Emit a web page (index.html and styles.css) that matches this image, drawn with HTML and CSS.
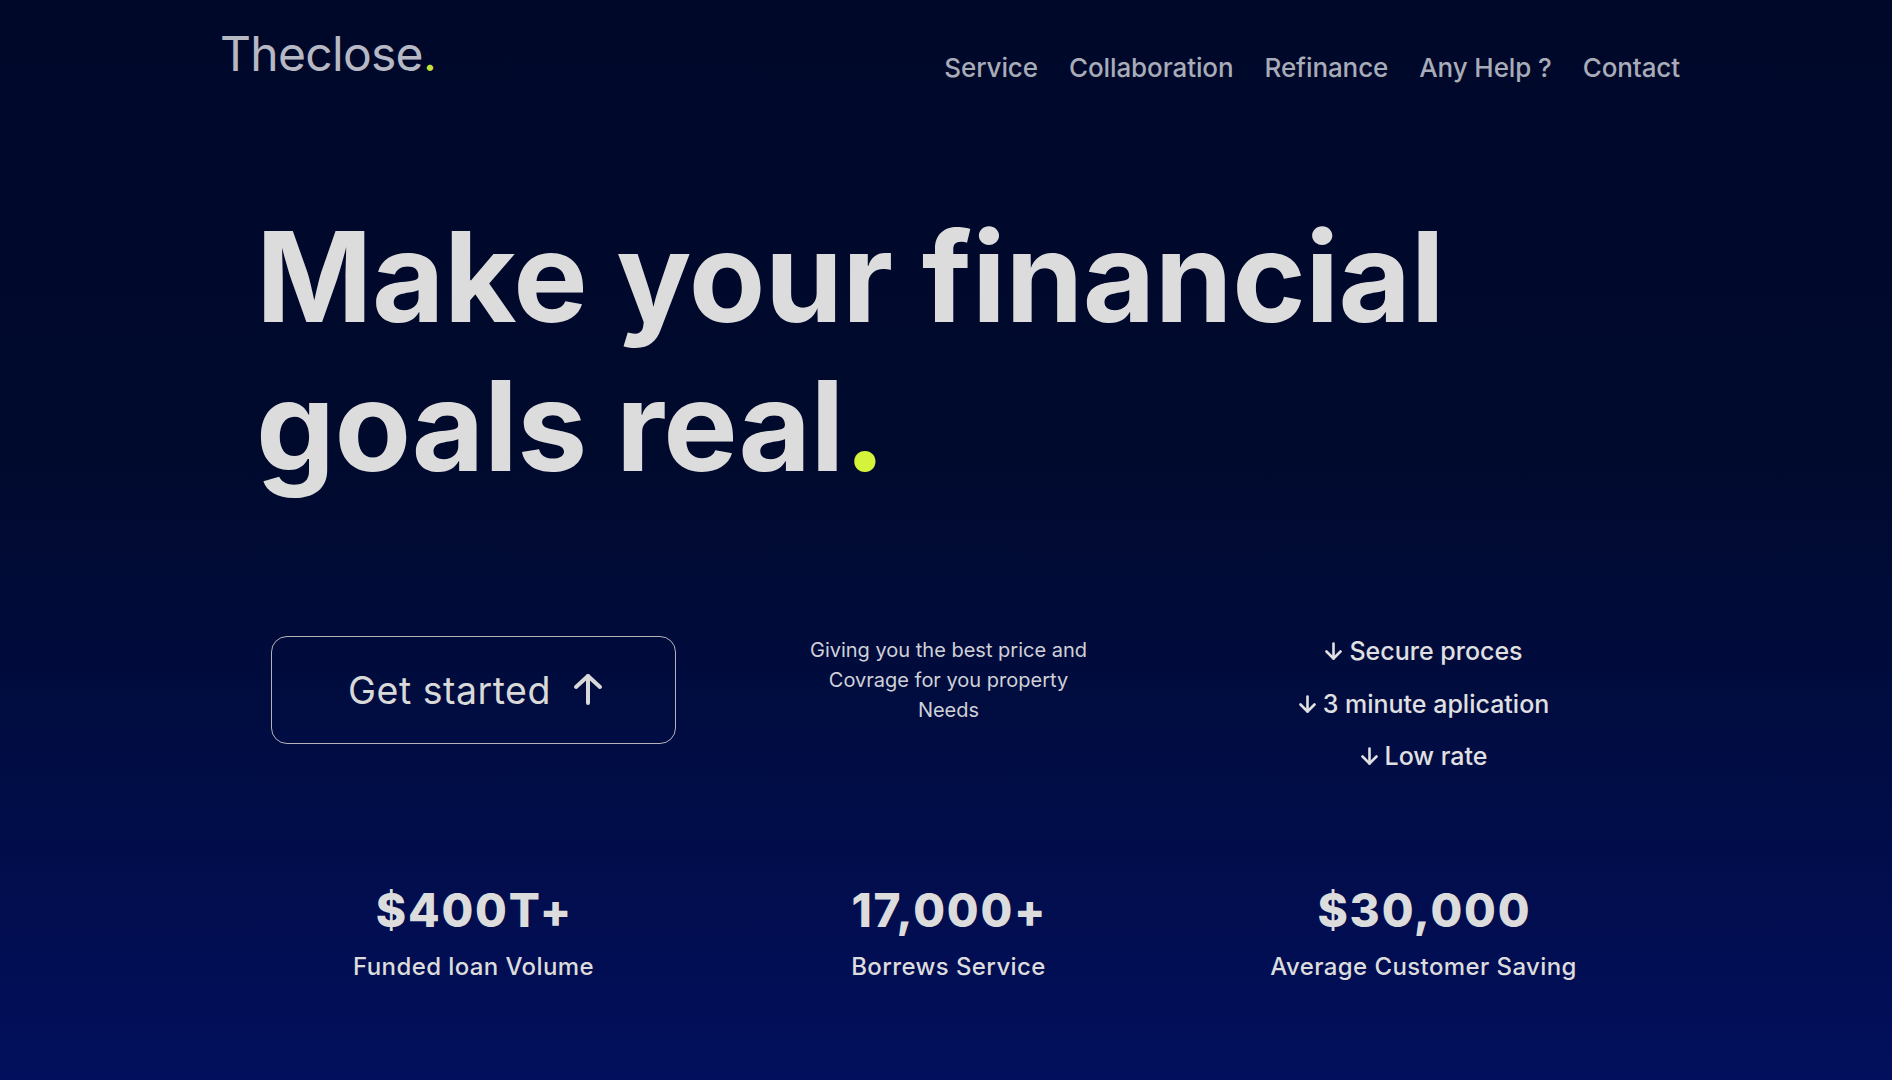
FILE: index.html
```html
<!DOCTYPE html>
<html lang="en">
<head>
<meta charset="utf-8">
<title>Theclose.</title>
<link rel="stylesheet" href="styles.css">
</head>
<body>
<div class="page">
  <header class="header">
    <div class="logo">Theclose<span class="dot">.</span></div>
    <nav class="nav">
      <a href="#">Service</a>
      <a href="#">Collaboration</a>
      <a href="#">Refinance</a>
      <a href="#">Any Help ?</a>
      <a href="#">Contact</a>
    </nav>
  </header>

  <h1 class="title">Make your financial<br>goals real<span class="dot">.</span></h1>

  <section class="row">
    <div class="cell">
      <a class="cta" href="#">
        <span>Get started</span>
        <svg class="cta-arrow" width="30" height="32" viewBox="0 0 30 32" fill="none" stroke="currentColor" stroke-width="4" stroke-linecap="round" stroke-linejoin="round"><path d="M15 30V3"/><path d="M3 14L15 3l12 11"/></svg>
      </a>
    </div>
    <div class="cell">
      <p class="blurb">Giving you the best price and<br>Covrage for you property<br>Needs</p>
    </div>
    <div class="cell">
      <ul class="features">
        <li><svg class="down" width="19" height="18" viewBox="0 0 19 18" fill="none" stroke="currentColor" stroke-width="2.6" stroke-linecap="round" stroke-linejoin="round"><path d="M9.5 1.5v15"/><path d="M2.5 9.5l7 7 7-7"/></svg>Secure proces</li>
        <li><svg class="down" width="19" height="18" viewBox="0 0 19 18" fill="none" stroke="currentColor" stroke-width="2.6" stroke-linecap="round" stroke-linejoin="round"><path d="M9.5 1.5v15"/><path d="M2.5 9.5l7 7 7-7"/></svg>3 minute aplication</li>
        <li><svg class="down" width="19" height="18" viewBox="0 0 19 18" fill="none" stroke="currentColor" stroke-width="2.6" stroke-linecap="round" stroke-linejoin="round"><path d="M9.5 1.5v15"/><path d="M2.5 9.5l7 7 7-7"/></svg>Low rate</li>
      </ul>
    </div>
  </section>

  <section class="row stats">
    <div class="stat">
      <div class="stat-num">$400T+</div>
      <div class="stat-label">Funded loan Volume</div>
    </div>
    <div class="stat">
      <div class="stat-num">17,000+</div>
      <div class="stat-label">Borrews Service</div>
    </div>
    <div class="stat">
      <div class="stat-num">$30,000</div>
      <div class="stat-label">Average Customer Saving</div>
    </div>
  </section>
</div>
</body>
</html>
```

FILE: styles.css
```css
* { box-sizing: border-box; }

html, body {
  margin: 0;
  padding: 0;
}

body {
  font-family: Inter, "Noto Sans", "Liberation Sans", sans-serif;
  background: linear-gradient(180deg, #00082a 0%, #000a2d 42%, #020f5c 100%);
  color: #dcdcdc;
  height: 1080px;
  overflow: hidden;
}

.page {
  height: 1080px;
}

.header {
  display: flex;
  justify-content: space-between;
  align-items: flex-start;
  padding: 30px 0 0 220px;
  width: 1680px;
}

.logo {
  font-size: 48px;
  line-height: 1;
  font-weight: 400;
  color: #b6b8c3;
  letter-spacing: -0.7px;
}

.dot {
  color: #d5f33b;
}

.logo .dot { color: #c6e03c; }

.nav {
  display: flex;
  gap: 31px;
  margin-top: 25px;
}

.nav a {
  font-size: 26px;
  line-height: 1;
  font-weight: 500;
  color: #a8acb8;
  text-decoration: none;
  letter-spacing: -0.1px;
}

.title {
  margin: 121px 0 0 256px;
  font-size: 125px;
  line-height: 149px;
  font-weight: 700;
  letter-spacing: -0.5px;
  color: #dcdcdc;
}

.row {
  display: grid;
  grid-template-columns: repeat(3, 475px);
  margin-left: 236px;
  margin-top: 136px;
  align-items: start;
}

.cell {
  display: flex;
  justify-content: center;
}

.cta {
  display: flex;
  align-items: center;
  justify-content: center;
  gap: 22px;
  width: 405px;
  height: 108px;
  padding-left: 4px;
  border: 1.5px solid #b4b4b8;
  border-radius: 16px;
  color: #d9d9d9;
  text-decoration: none;
  font-size: 37.5px;
  font-weight: 400;
  letter-spacing: 0.5px;
}

.cta-arrow { margin-top: -3px; }

.blurb {
  margin: -1px 0 0;
  text-align: center;
  font-size: 20px;
  line-height: 30px;
  color: #d0d1d8;
}

.features {
  list-style: none;
  margin: 0;
  padding: 0;
  display: flex;
  flex-direction: column;
  align-items: center;
  gap: 22.5px;
}

.features li {
  display: flex;
  align-items: center;
  gap: 6px;
  font-size: 25px;
  line-height: 30px;
  font-weight: 500;
  color: #e0e0e2;
}

.stats {
  margin-top: 112px;
}

.stat {
  display: flex;
  flex-direction: column;
  align-items: center;
}

.stat-num {
  font-size: 46px;
  line-height: 55px;
  font-weight: 800;
  letter-spacing: 1.8px;
  padding-left: 1.8px;
  color: #dcdcdc;
}

.stat-label {
  margin-top: 14px;
  font-size: 24px;
  line-height: 29px;
  font-weight: 500;
  letter-spacing: 0.4px;
  color: #dcdcdc;
}
```
